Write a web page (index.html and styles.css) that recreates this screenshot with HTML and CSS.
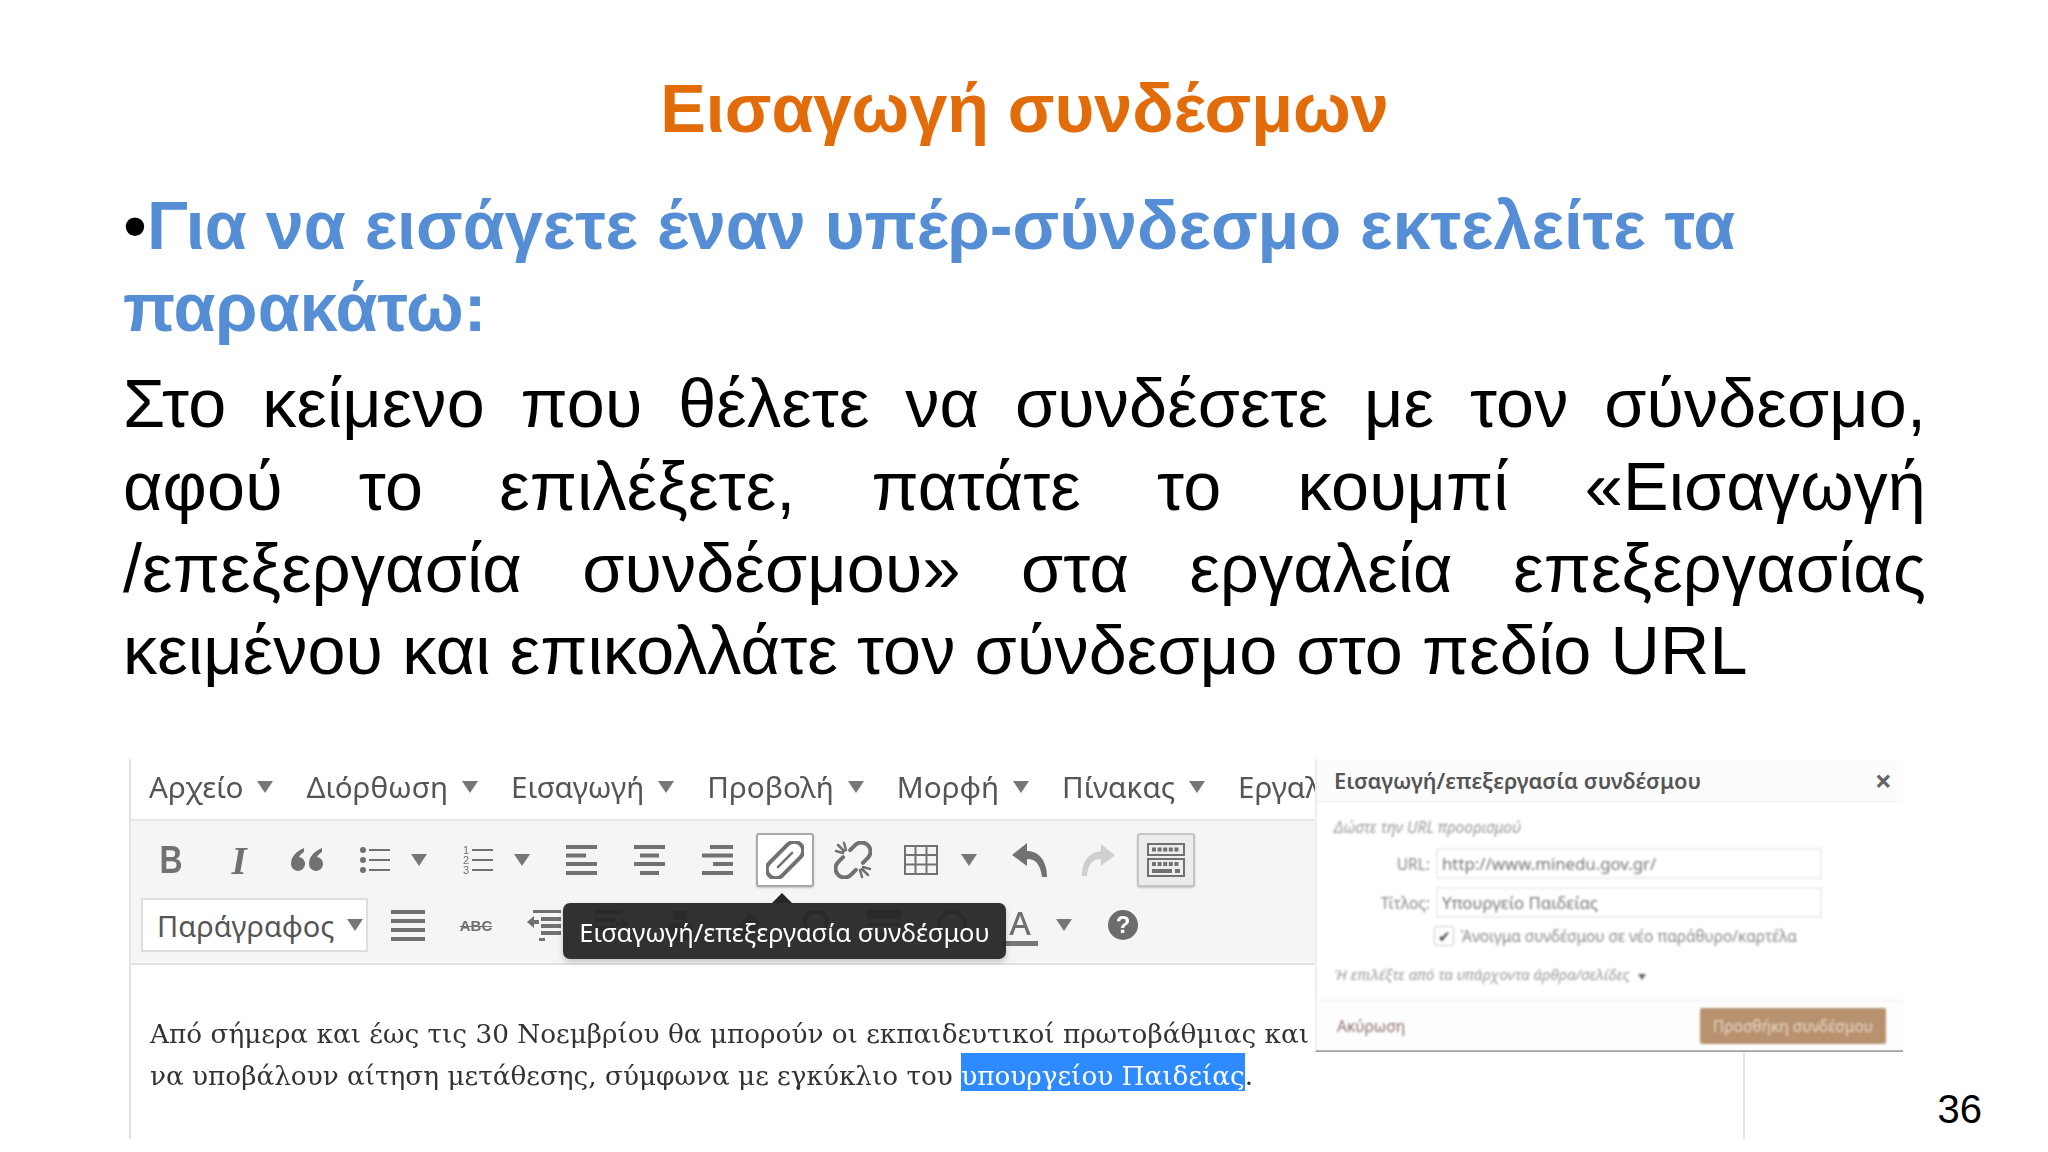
FILE: index.html
```html
<!DOCTYPE html>
<html lang="el">
<head>
    <meta charset="UTF-8">
    <title>Εισαγωγή συνδέσμων</title>
    <link rel="stylesheet" href="styles.css">
</head>
<body>
    <div class="slide">
        <h1 class="title">Εισαγωγή συνδέσμων</h1>
        <p class="lead"><span class="bullet">•</span>Για να εισάγετε έναν υπέρ-σύνδεσμο εκτελείτε τα παρακάτω:</p>
        <p class="text">Στο κείμενο που θέλετε να συνδέσετε με τον σύνδεσμο, αφού το επιλέξετε, πατάτε το κουμπί «Εισαγωγή <span class="nowrap">/επεξεργασία</span> συνδέσμου» στα εργαλεία επεξεργασίας κειμένου και επικολλάτε τον σύνδεσμο στο πεδίο URL</p>

        <div class="editor">
            <div class="menubar">
                <span class="menu-item">Αρχείο<i class="caret"></i></span>
                <span class="menu-item">Διόρθωση<i class="caret"></i></span>
                <span class="menu-item">Εισαγωγή<i class="caret"></i></span>
                <span class="menu-item">Προβολή<i class="caret"></i></span>
                <span class="menu-item">Μορφή<i class="caret"></i></span>
                <span class="menu-item">Πίνακας<i class="caret"></i></span>
                <span class="menu-item">Εργαλεία<i class="caret"></i></span>
            </div>

            <div class="toolbar">
                <div class="tool-row">
                    <span class="btn"><span class="glyph-bold">B</span></span>
                    <span class="btn"><span class="glyph-italic">I</span></span>
                    <span class="btn">
                        <svg width="32" height="26" viewBox="0 0 32 26"><path d="M13 1C6 4 0 9 0 17a7 7 0 1 0 8-7c1-2 3-4 5-5zM31 1c-7 3-13 8-13 16a7 7 0 1 0 8-7c1-2 3-4 5-5z"/></svg>
                    </span>
                    <span class="btn">
                        <svg width="30" height="28" viewBox="0 0 30 28"><circle cx="3" cy="4" r="3"/><circle cx="3" cy="14" r="3"/><circle cx="3" cy="24" r="3"/><rect x="9" y="3" width="21" height="2"/><rect x="9" y="13" width="21" height="2"/><rect x="9" y="23" width="21" height="2"/></svg>
                    </span>
                    <span class="btn-caret"><i class="caret"></i></span>
                    <span class="btn">
                        <svg width="30" height="30" viewBox="0 0 30 30"><text class="mini-num" x="0" y="9">1</text><text class="mini-num" x="0" y="19">2</text><text class="mini-num" x="0" y="29">3</text><rect x="9" y="4" width="21" height="2"/><rect x="9" y="14" width="21" height="2"/><rect x="9" y="24" width="21" height="2"/></svg>
                    </span>
                    <span class="btn-caret"><i class="caret"></i></span>
                    <span class="btn">
                        <svg width="31" height="30" viewBox="0 0 31 30"><rect width="31" height="4"/><rect y="8.500" width="20" height="4"/><rect y="17" width="31" height="4"/><rect y="26" width="31" height="4"/></svg>
                    </span>
                    <span class="btn">
                        <svg width="31" height="30" viewBox="0 0 31 30"><rect width="31" height="4" x="0"/><rect x="6" y="8.500" width="19" height="4"/><rect y="17" width="31" height="4"/><rect x="6" y="26" width="19" height="4"/></svg>
                    </span>
                    <span class="btn">
                        <svg width="31" height="30" viewBox="0 0 31 30"><rect x="8" width="23" height="4"/><rect y="8.500" width="31" height="4"/><rect x="11" y="17" width="20" height="4"/><rect y="26" width="31" height="4"/></svg>
                    </span>
                    <span class="btn"><span class="btn-box">
                        <svg width="38" height="38" viewBox="0 0 38 38" class="line-icon"><g transform="rotate(-45 19 19)"><rect x="-3" y="10" width="44" height="18" rx="9"/><path class="thin" d="M9 19h20"/></g></svg>
                    </span></span>
                    <span class="btn">
                        <svg width="38" height="38" viewBox="0 0 38 38" class="line-icon"><g transform="rotate(-45 19 19)"><path d="M24 10h7a9 9 0 0 1 0 18h-7M14 10H7a9 9 0 0 0 0 18h7"/></g><path class="thin" d="M2 10l7 2M10 2l2 7M4 4l6 6M36 28l-7-2M28 36l-2-7M34 34l-6-6"/></svg>
                    </span>
                    <span class="btn">
                        <svg width="34" height="30" viewBox="0 0 34 30" class="grid-icon"><path d="M1 1h32v28H1zM1 10h32M1 19.500h32M11.500 1v28M22.500 1v28"/></svg>
                    </span>
                    <span class="btn-caret wide"><i class="caret"></i></span>
                    <span class="btn">
                        <svg width="36" height="36" viewBox="0 0 36 36"><path d="M15 1 0 13l15 11v-7c8 0 13 4 15 18h5C35 19 27 9 15 9z"/></svg>
                    </span>
                    <span class="btn redo">
                        <svg width="34" height="36" viewBox="0 0 36 36"><path d="M21 1l15 12-15 11v-7C13 17 8 21 6 35H1C1 19 9 9 21 9z"/></svg>
                    </span>
                    <span class="btn"><span class="btn-box pressed">
                        <svg width="38" height="34" viewBox="0 0 38 34" class="sink-icon"><path class="frame" d="M1 1h36v11H1zM1 16h36v17H1z"/><path class="dots" d="M5 6.500h28M5 21h28"/><rect x="5" y="26" width="20" height="4"/><rect x="28" y="26" width="5" height="4"/></svg>
                    </span></span>
                </div>

                <div class="tool-row">
                    <span class="format-select">Παράγραφος<i class="caret"></i></span>
                    <span class="btn">
                        <svg width="34" height="31" viewBox="0 0 34 31"><rect width="34" height="4"/><rect y="9" width="34" height="4"/><rect y="18" width="34" height="4"/><rect y="27" width="34" height="4"/></svg>
                    </span>
                    <span class="btn"><span class="glyph-strike">ABC</span></span>
                    <span class="btn">
                        <svg width="34" height="31" viewBox="0 0 34 31"><rect x="6" width="28" height="3"/><rect x="14" y="7" width="20" height="4"/><rect x="14" y="14" width="20" height="4"/><rect x="14" y="21" width="20" height="4"/><rect x="12" y="28" width="6" height="3"/><path d="M0 12l7-6v4h5v4H7v4z"/></svg>
                    </span>
                    <span class="btn">
                        <svg width="34" height="31" viewBox="0 0 34 31"><rect width="28" height="4"/><rect y="8" width="20" height="4"/><rect y="16" width="20" height="4"/><path d="M34 14l-8-6v4h-5v4h5v4z"/></svg>
                    </span>
                    <span class="btn">
                        <svg width="30" height="32" viewBox="0 0 30 32"><rect x="3" y="14" width="24" height="18"/><rect x="9" y="2" width="12" height="9"/></svg>
                    </span>
                    <span class="btn">
                        <svg width="28" height="30" viewBox="0 0 28 30"><path d="M16 2l11 10-12 16H5L1 22z"/></svg>
                    </span>
                    <span class="btn">
                        <svg width="28" height="30" viewBox="0 0 28 30" class="line-icon"><path d="M3 28h7v-5C5 20 3 16 3 12 3 5 8 2 14 2s11 3 11 10c0 4-2 8-7 11v5h7"/></svg>
                    </span>
                    <span class="btn">
                        <svg width="34" height="30" viewBox="0 0 34 30"><rect width="34" height="9"/><rect y="13" width="34" height="3"/><rect y="22" width="34" height="8"/></svg>
                    </span>
                    <span class="btn">
                        <svg width="30" height="30" viewBox="0 0 30 30" class="line-icon"><circle cx="15" cy="15" r="13"/></svg>
                    </span>
                    <span class="btn"><span class="glyph-color">A</span></span>
                    <span class="btn-caret"><i class="caret"></i></span>
                    <span class="btn"><span class="glyph-help">?</span></span>
                </div>
            </div>

            <div class="content">
                <p>Από σήμερα και έως τις 30 Νοεμβρίου θα μπορούν οι εκπαιδευτικοί πρωτοβάθμιας και δευτεροβάθμιας</p>
                <p>να υποβάλουν αίτηση μετάθεσης, σύμφωνα με εγκύκλιο του <span class="selected">υπουργείου Παιδείας</span>.</p>
            </div>

            <div class="tooltip">Εισαγωγή/επεξεργασία συνδέσμου</div>

            <div class="dialog">
                <div class="dialog-head">
                    <span>Εισαγωγή/επεξεργασία συνδέσμου</span>
                    <span class="dialog-close">×</span>
                </div>
                <div class="dialog-body">
                    <div class="hint">Δώστε την URL προορισμού</div>
                    <div class="field"><label>URL:</label><span class="input">http://www.minedu.gov.gr/</span></div>
                    <div class="field"><label>Τίτλος:</label><span class="input">Υπουργείο Παιδείας</span></div>
                    <div class="check-row"><span class="checkbox">✔</span>Άνοιγμα συνδέσμου σε νέο παράθυρο/καρτέλα</div>
                    <div class="hint existing">Ή επιλέξτε από τα υπάρχοντα άρθρα/σελίδες <i class="small-caret"></i></div>
                </div>
                <div class="dialog-foot">
                    <span class="cancel">Ακύρωση</span>
                    <span class="submit">Προσθήκη συνδέσμου</span>
                </div>
            </div>
        </div>

        <div class="page-number">36</div>
    </div>
</body>
</html>
```

FILE: styles.css
```css
body {
    margin: 0;
    background-color: white;
    font-family: "Liberation Sans", Arial, sans-serif;
}
.slide {
    position: relative;
    width: 2048px;
    height: 1152px;
    padding: 67px 122px 0 123px;
    box-sizing: border-box;
    overflow: hidden;
}
.title {
    margin: 0;
    font-size: 68.3px;
    line-height: 82px;
    color: #e36c0a;
    text-align: center;
}
.lead {
    margin: 35px 0 0;
    font-size: 68.3px;
    font-weight: bold;
    line-height: 82px;
    color: #558ed5;
}
.bullet {
    color: black;
    font-weight: normal;
}
.text {
    margin: 14.400px 0 0;
    font-size: 68.3px;
    line-height: 82.2px;
    letter-spacing: 0.13px;
    color: black;
    text-align: justify;
}
.nowrap {
    white-space: nowrap;
}
.page-number {
    position: absolute;
    right: 66px;
    top: 1087px;
    font-size: 40px;
    color: black;
}

/* editor screenshot */
.editor {
    position: relative;
    width: 1616px;
    height: 380px;
    margin: 68px 0 0 6px;
    border-left: 2px solid #e4e4e4;
    border-right: 2px solid #e4e4e4;
    box-sizing: border-box;
    font-family: "Noto Sans", sans-serif;
    filter: blur(0.6px);
}
.menubar {
    display: flex;
    align-items: center;
    gap: 33px;
    height: 62px;
    padding: 0 0 5px 18px;
    border-bottom: 2px solid #e6e6e6;
    box-sizing: border-box;
    white-space: nowrap;
    overflow: hidden;
}
.menu-item {
    display: flex;
    align-items: center;
    gap: 14px;
    font-size: 29.700px;
    color: #555;
}
.caret {
    display: inline-block;
    width: 0;
    height: 0;
    border-left: 8.500px solid transparent;
    border-right: 8.500px solid transparent;
    border-top: 12px solid #777;
}
.toolbar {
    display: flex;
    flex-direction: column;
    gap: 11px;
    height: 144px;
    padding: 12px 0 0 6px;
    background-color: #f5f5f5;
    border-bottom: 2px solid #e2e2e2;
    box-sizing: border-box;
}
.tool-row {
    display: flex;
    align-items: center;
    height: 54px;
}
.btn {
    display: flex;
    flex: none;
    align-items: center;
    justify-content: center;
    width: 68px;
    height: 54px;
    fill: #717171;
    color: #717171;
}
.btn-caret {
    display: flex;
    flex: none;
    align-items: center;
    width: 35px;
    padding-left: 2px;
    box-sizing: border-box;
}
.btn-caret.wide {
    width: 41px;
    padding-left: 6px;
}
.btn-box {
    display: flex;
    align-items: center;
    justify-content: center;
    width: 58px;
    height: 54px;
    background-color: white;
    border: 2px solid #a9a9a9;
    border-radius: 3px;
    box-sizing: border-box;
    box-shadow: 0 1px 2px rgba(0,0,0,0.2);
}
.btn-box.pressed {
    background-color: #ececec;
    border-color: #c4c4c4;
}
.redo {
    fill: #cfcfcf;
}
.line-icon {
    fill: none;
    stroke: #717171;
    stroke-width: 4;
    stroke-linecap: round;
}
.line-icon .thin {
    stroke-width: 2.500;
}
.grid-icon {
    fill: none;
    stroke: #717171;
    stroke-width: 2;
}
.sink-icon .frame {
    fill: none;
    stroke: #717171;
    stroke-width: 2;
}
.sink-icon .dots {
    fill: none;
    stroke: #717171;
    stroke-width: 4;
    stroke-dasharray: 4 1.600;
}
.mini-num {
    font-size: 11px;
    font-family: "Liberation Sans", sans-serif;
}
.glyph-bold {
    font: bold 39px "Liberation Sans", sans-serif;
    transform: scaleX(0.82);
}
.glyph-italic {
    font: italic bold 39px "Liberation Serif", serif;
}
.glyph-strike {
    font: bold 15px "Liberation Sans", sans-serif;
    text-decoration: line-through;
}
.glyph-color {
    font: 500 33px "Noto Sans", sans-serif;
    line-height: 36px;
    width: 36px;
    text-align: center;
    border-bottom: 5px solid #777;
    color: #707070;
}
.glyph-help {
    width: 30px;
    height: 30px;
    border-radius: 50%;
    background-color: #6c6c6c;
    color: white;
    font: bold 24px/30px "Liberation Sans", sans-serif;
    text-align: center;
}
.format-select {
    display: flex;
    flex: none;
    align-items: center;
    gap: 13px;
    width: 227px;
    height: 54px;
    margin: 0 6px 0 4px;
    padding-left: 14px;
    background-color: white;
    border: 2px solid #dedede;
    box-sizing: border-box;
    font-size: 29px;
    color: #555;
}
.content {
    padding-top: 48px;
    padding-left: 19px;
    font-family: "DejaVu Serif", serif;
    font-size: 26.300px;
    line-height: 42px;
    color: #333;
    white-space: nowrap;
    overflow: hidden;
}
.content p {
    margin: 0;
}
.selected {
    padding: 8px 0 0;
    background-color: #2e8bff;
    color: white;
}
.tooltip {
    position: absolute;
    left: 432px;
    top: 144px;
    width: 443px;
    height: 56px;
    background-color: rgba(38,38,38,0.95);
    border-radius: 7px;
    box-shadow: 0 3px 6px rgba(0,0,0,0.2);
    color: white;
    font-size: 25.500px;
    line-height: 58px;
    text-align: center;
    white-space: nowrap;
}
.tooltip::before {
    content: "";
    position: absolute;
    left: 209px;
    top: -10px;
    border-left: 10px solid transparent;
    border-right: 10px solid transparent;
    border-bottom: 10px solid #262626;
}

/* dialog, blurrier in the source picture */
.dialog {
    position: absolute;
    left: 1184px;
    top: 0;
    width: 588px;
    height: 293px;
    background-color: white;
    border-left: 2px solid #eee;
    border-bottom: 2px solid #999;
    box-sizing: border-box;
    color: #666;
}
.dialog-head {
    display: flex;
    justify-content: space-between;
    align-items: center;
    height: 43px;
    padding: 0 11px 0 17px;
    background-color: #fcfcfc;
    border-bottom: 1px solid #f2f2f2;
    box-sizing: border-box;
    font-size: 21.800px;
    font-weight: 600;
    color: #555;
}
.dialog-close {
    font-size: 30px;
    font-weight: bold;
    color: #666;
}
.dialog-body {
    height: 198px;
    padding: 14px 0 0 17px;
    box-sizing: border-box;
    filter: blur(0.9px);
}
.hint {
    font-size: 15.500px;
    font-style: italic;
    color: #999;
}
.field {
    display: flex;
    align-items: center;
    gap: 8px;
    height: 31px;
    margin-top: 8px;
    font-size: 15.500px;
    color: #888;
}
.field + .field {
    margin-top: 8px;
}
.hint + .field {
    margin-top: 10px;
}
.field label {
    width: 96px;
    text-align: right;
}
.input {
    width: 386px;
    height: 31px;
    padding-left: 4px;
    margin-left: -2px;
    border: 2px solid #eee;
    box-sizing: border-box;
    line-height: 27px;
    font-size: 16.800px;
    color: #777;
}
.check-row {
    display: flex;
    align-items: center;
    gap: 7px;
    margin: 7.500px 0 0 100px;
    font-size: 15.400px;
    color: #888;
}
.checkbox {
    width: 20px;
    height: 20px;
    border: 1px solid #ccc;
    border-radius: 2px;
    box-sizing: border-box;
    font-size: 15px;
    line-height: 18px;
    text-align: center;
    color: #444;
}
.existing {
    margin-top: 17.500px;
    font-size: 15.200px;
}
.small-caret {
    display: inline-block;
    margin-left: 4px;
    border-left: 4px solid transparent;
    border-right: 4px solid transparent;
    border-top: 6px solid #666;
}
.dialog-foot {
    display: flex;
    justify-content: space-between;
    align-items: center;
    height: 50px;
    padding: 0 17px 0 20px;
    background-color: #fdfdfd;
    border-top: 1px solid #f0f0f0;
    box-sizing: border-box;
    filter: blur(0.9px);
}
.cancel {
    font-size: 15.500px;
    color: #8c6e6e;
}
.submit {
    width: 186px;
    height: 36px;
    background-color: #b8926f;
    border-radius: 2px;
    font-size: 15.500px;
    line-height: 36px;
    text-align: center;
    color: #e8d8c8;
}
```
